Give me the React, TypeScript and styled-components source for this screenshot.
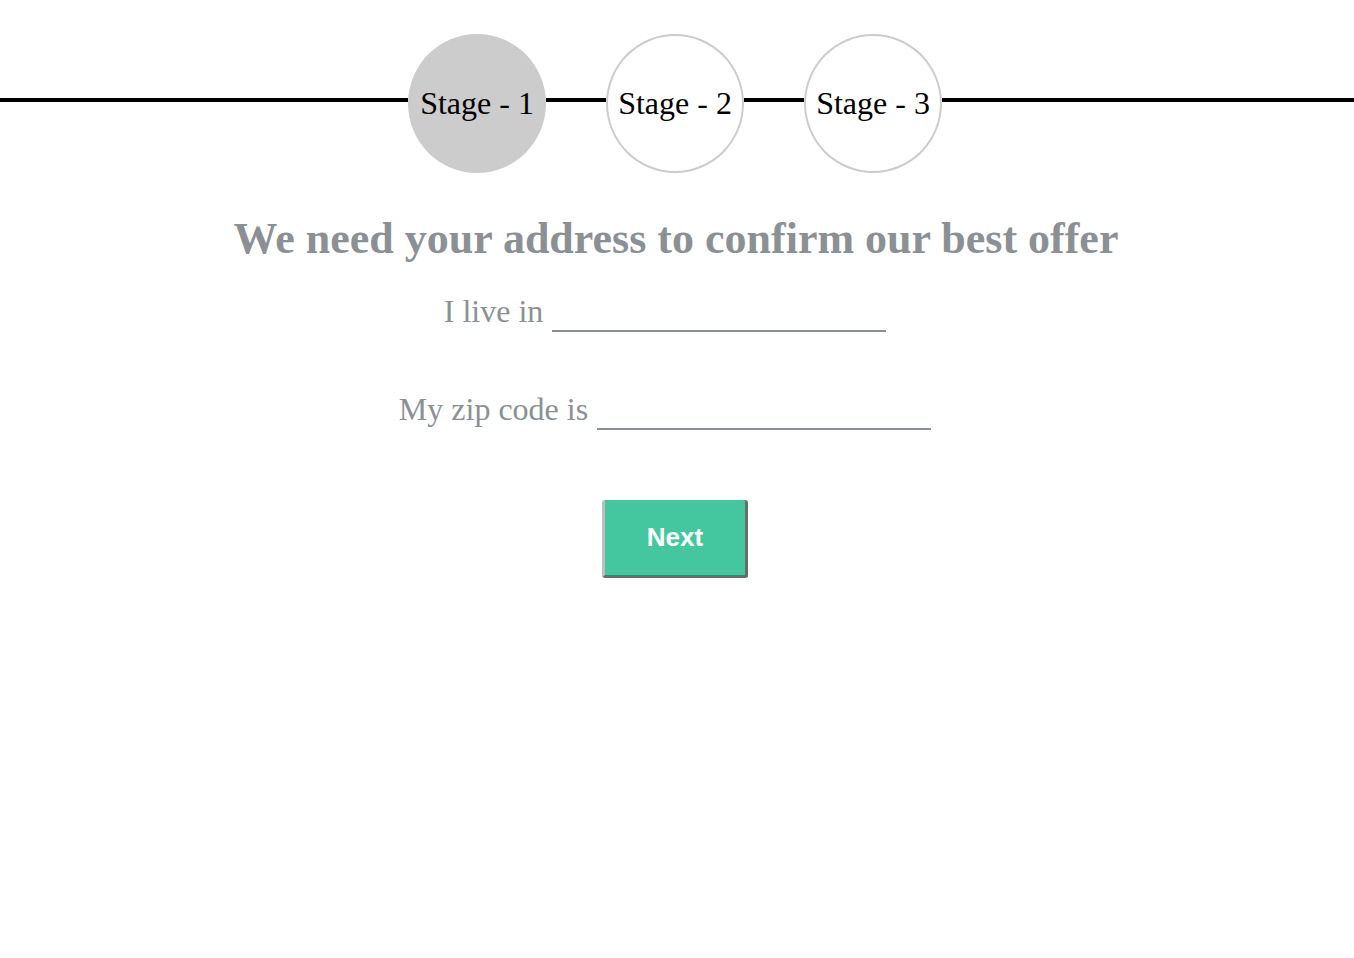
import React from "react";
import styled, { createGlobalStyle } from "styled-components";

const Global = createGlobalStyle`
  html, body { margin: 0; padding: 0; background: #fff; }
  body { font-family: "Liberation Serif", "Times New Roman", serif; }
`;

const Page = styled.div`
  width: 100%;
  display: flex;
  flex-direction: column;
  align-items: stretch;
`;

const StageBar = styled.div`
  display: flex;
  align-items: flex-start;
  margin-top: 34px;
`;

const Segment = styled.div<{ $fixed?: boolean; $basis?: number }>`
  ${(p) => (p.$fixed ? "width: 60px; flex: 0 0 60px;" : `flex: 1 1 ${p.$basis ?? 0}px;`)}
  height: 4px;
  margin-top: 64px;
  background: #000;
`;

const Stage = styled.div<{ $active?: boolean }>`
  box-sizing: border-box;
  width: 138px;
  height: 139px;
  border-radius: 50%;
  border: 2px solid #cccccc;
  background: ${(p) => (p.$active ? "#cccccc" : "#ffffff")};
  display: flex;
  align-items: center;
  justify-content: center;
  font-family: "Liberation Serif", "Times New Roman", serif;
  font-size: 32px;
  color: #000;
  white-space: nowrap;
`;

const Heading = styled.h1`
  margin: 41px 0 0;
  padding-right: 2px;
  text-align: center;
  font-family: "Liberation Serif", "Times New Roman", serif;
  font-weight: bold;
  font-size: 44px;
  line-height: 50px;
  color: #8b9095;
`;

const Form = styled.div`
  display: flex;
  flex-direction: column;
  align-items: center;
  gap: 58px;
  margin-top: 27px;
  padding-right: 24px;
`;

const Row = styled.label`
  display: flex;
  align-items: flex-end;
  gap: 9px;
  height: 40px;
`;

const Label = styled.span`
  font-family: "Liberation Serif", "Times New Roman", serif;
  font-size: 32px;
  line-height: 40px;
  color: #8b9095;
  white-space: nowrap;
`;

const Field = styled.input`
  box-sizing: border-box;
  width: 334px;
  height: 30px;
  margin-bottom: -1px;
  border: none;
  border-bottom: 2px solid #8b9095;
  outline: none;
  background: transparent;
  font-family: "Liberation Serif", "Times New Roman", serif;
  font-size: 28px;
  color: #555;
  padding: 0 4px;
`;

const ButtonWrap = styled.div`
  display: flex;
  justify-content: center;
  margin-top: 71px;
  padding-right: 4px;
`;

const NextButton = styled.button`
  box-sizing: border-box;
  width: 146px;
  height: 78px;
  background: #44c79e;
  border: none;
  border-left: 3px solid #bdbdbd;
  border-right: 3px solid #6b6b6b;
  border-bottom: 3px solid #6b6b6b;
  border-radius: 3px;
  color: #fff;
  font-family: "Liberation Sans", Arial, Helvetica, sans-serif;
  font-weight: bold;
  font-size: 26px;
  cursor: pointer;
  padding: 0;
`;

export default function App() {
  return (
    <Page>
      <Global />
      <StageBar>
        <Segment />
        <Stage $active>Stage - 1</Stage>
        <Segment $fixed />
        <Stage>Stage - 2</Stage>
        <Segment $fixed />
        <Stage>Stage - 3</Stage>
        <Segment $basis={4} />
      </StageBar>
      <Heading>We need your address to confirm our best offer</Heading>
      <Form>
        <Row>
          <Label>I live in</Label>
          <Field type="text" />
        </Row>
        <Row>
          <Label>My zip code is</Label>
          <Field type="text" />
        </Row>
      </Form>
      <ButtonWrap>
        <NextButton>Next</NextButton>
      </ButtonWrap>
    </Page>
  );
}
